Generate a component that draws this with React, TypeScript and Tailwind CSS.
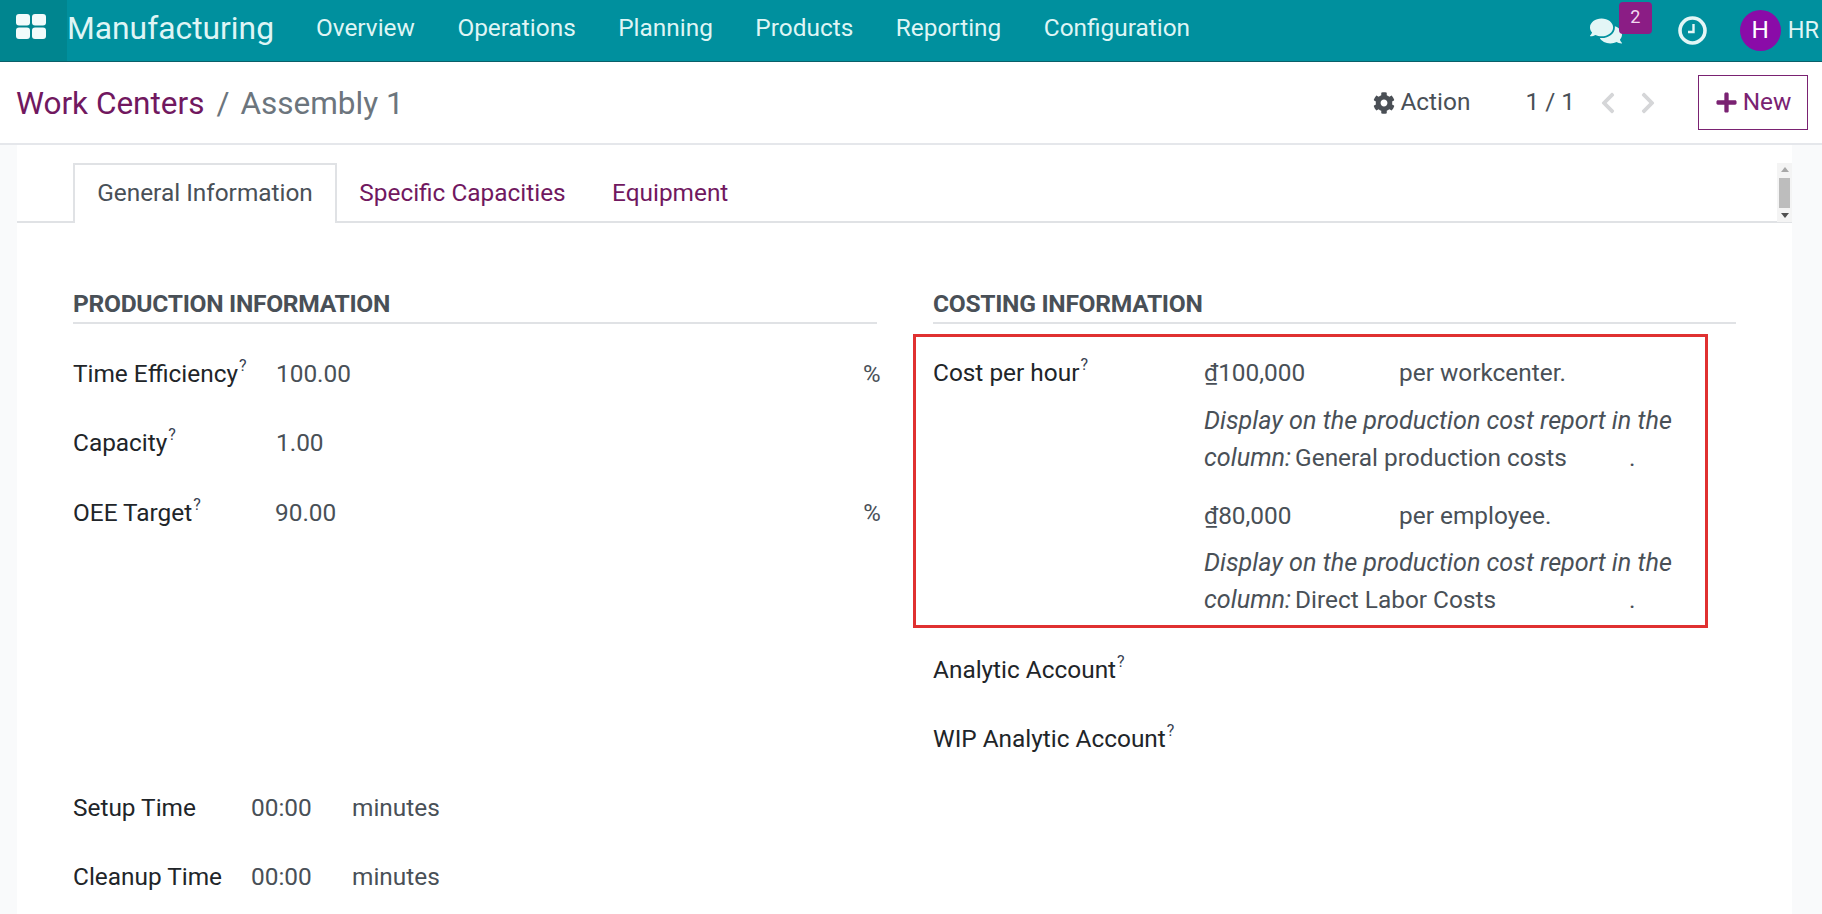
import React from "react";
import { FaCog, FaComments, FaPlus, FaChevronLeft, FaChevronRight } from "react-icons/fa";

const Q = () => <sup className="text-[16px] leading-none text-[#374151] relative top-[-2px] ml-[1px] align-super">?</sup>;

function Field({ label, value, valueW, unit, unitCls, h = "h-[69px]" }: { label: string; value: string; valueW: string; unit?: string; unitCls?: string; h?: string }) {
  return (
    <div className={`flex items-center ${h}`}>
      <div className={`${valueW} shrink-0 text-[#212529]`}>{label}<Q /></div>
      <div className="text-[#495057]">{value}</div>
      {unit && <div className={unitCls}>{unit}</div>}
    </div>
  );
}

function Time({ label, unit }: { label: string; unit: string }) {
  return (
    <div className="flex items-center h-[69px]">
      <div className="w-[178px] shrink-0 text-[#212529]">{label}</div>
      <div className="w-[101px] shrink-0 text-[#495057]">00:00</div>
      <div className="text-[#495057]">{unit}</div>
    </div>
  );
}

export default function App() {
  return (
    <div className="w-[1822px] h-[914px] overflow-hidden flex flex-col bg-white font-['Roboto',sans-serif] text-[24.4px]">
      <header className="h-[62px] shrink-0 flex items-stretch bg-[#00909e] border-b border-[#0a5f69] text-[#dff5f5]">
        <div className="w-[67px] shrink-0 bg-[#00858f] flex items-center pl-[16px] pb-[9px]">
          <svg width="30" height="25" viewBox="0 0 30 25" fill="#f2fbfb">
            <rect x="0" y="0" width="14" height="11.5" rx="3" />
            <rect x="16" y="0" width="14" height="11.5" rx="3" />
            <rect x="0" y="13.5" width="14" height="11.5" rx="3" />
            <rect x="16" y="13.5" width="14" height="11.5" rx="3" />
          </svg>
        </div>
        <div className="text-[31.8px] w-[249px] shrink-0 flex items-center pb-[4px]">Manufacturing</div>
        <nav className="flex items-center gap-[42.5px] pb-[4px]">
          <span>Overview</span><span>Operations</span><span>Planning</span><span>Products</span><span>Reporting</span><span>Configuration</span>
        </nav>
        <div className="ml-auto flex items-center relative">
          <FaComments className="text-[32px] text-[#e3f6f6] mr-[56px]" />
          <span className="absolute left-[29px] top-[2px] w-[33px] h-[32px] rounded-[4px] bg-[#8b1d85] text-[18px] text-[#f3d9f0] flex items-center justify-center pb-[4px]">2</span>
          <svg width="29" height="29" viewBox="0 0 29 29" fill="none" stroke="#e3f6f6" className="mr-[33px]">
            <circle cx="14.5" cy="14.5" r="12.5" strokeWidth="3.6" />
            <path d="M15.5 8v8H10" strokeWidth="2.4" />
          </svg>
          <div className="w-[41px] h-[41px] rounded-full bg-[#8a0ba8] text-white flex items-center justify-center mr-[7px]">H</div>
          <span className="mr-[3px] text-[23.5px]">HR</span>
        </div>
      </header>

      <div className="h-[83px] shrink-0 flex items-center border-b-2 border-[#e5e7eb] bg-white pl-[16px] pr-[14px]">
        <div className="text-[31.5px] flex items-baseline pt-[2px]">
          <span className="text-[#71185f]">Work Centers</span>
          <span className="text-[#6c757d] ml-[12px] mr-[11px]">/</span>
          <span className="text-[#6c757d]">Assembly 1</span>
        </div>
        <div className="ml-auto flex items-center text-[#495057]">
          <FaCog className="text-[22px] mr-[5px] text-[#4a4f55]" />
          <span className="mr-[55px]">Action</span>
          <span className="mr-[21px]">1 / 1</span>
          <FaChevronLeft className="text-[24px] text-[#d5d6d8] mr-[16px]" />
          <FaChevronRight className="text-[24px] text-[#d5d6d8] mr-[38px]" />
          <button className="w-[110px] h-[55px] border border-[#7a2272] flex items-center justify-center text-[#7a2272] bg-white">
            <FaPlus className="text-[23px] mr-[5px]" />New
          </button>
        </div>
      </div>

      <div className="flex-1 min-h-0 bg-[#f9fafb] pl-[17px] pr-[30px]">
        <div className="bg-white h-full overflow-hidden">
          <div className="h-[78px] pt-[18px] pl-[56px] flex border-b-2 border-[#e0e2e5] relative">
            <div className="w-[264px] h-[60px] bg-white border-2 border-b-0 border-[#e0e2e5] flex items-center justify-center text-[#495057] pb-[2px]">General Information</div>
            <div className="w-[251px] h-[60px] flex items-center justify-center text-[#71185f]">Specific Capacities</div>
            <div className="h-[60px] flex items-center text-[#71185f] pl-[24px]">Equipment</div>
            <div className="absolute right-0 top-[18px] w-[15px] h-[59px] bg-[#f4f4f4] flex flex-col items-center justify-between py-[4px]">
              <span className="w-0 h-0 border-x-[4px] border-x-transparent border-b-[5px] border-b-[#a8a8a8]" />
              <span className="w-[11px] h-[30px] bg-[#bdbdbd]" />
              <span className="w-0 h-0 border-x-[4px] border-x-transparent border-t-[5px] border-t-[#505050]" />
            </div>
          </div>

          <div className="grid grid-cols-[804px_803px] gap-x-[56px] pl-[56px] pt-[54px]">
            <div>
              <h2 className="h-[47px] border-b-2 border-[#e0e2e5] text-[#495057] font-bold uppercase text-[24.6px] tracking-[-0.3px] leading-[54px]">Production Information</h2>
              <div className="pt-[15px]">
                <Field label="Time Efficiency" value="100.00" valueW="w-[203px]" unit="%" unitCls="ml-[512px] text-[24px] text-[#495057]" h="h-[70px]" />
                <Field label="Capacity" value="1.00" valueW="w-[203px]" />
                <Field label="OEE Target" value="90.00" valueW="w-[202px]" unit="%" unitCls="ml-[527px] text-[24px] text-[#495057]" h="h-[70px]" />
              </div>
              <div className="pt-[226px]">
                <Time label="Setup Time" unit="minutes" />
                <Time label="Cleanup Time" unit="minutes" />
              </div>
            </div>

            <div>
              <h2 className="h-[47px] border-b-2 border-[#e0e2e5] text-[#495057] font-bold uppercase text-[24.6px] tracking-[-0.3px] leading-[54px]">Costing Information</h2>
              <div className="relative pt-[30px] flex">
                <div className="absolute left-[-20px] top-[10px] w-[795px] h-[294px] border-[3px] border-[#e03131] pointer-events-none" />
                <div className="w-[271px] shrink-0 text-[#212529] leading-[37px]">Cost per hour<Q /></div>
                <div className="w-[470px] leading-[37px] text-[#495057]">
                  <div className="flex"><span className="w-[195px]"><span className="underline">₫</span>100,000</span><span>per workcenter.</span></div>
                  <div className="mt-[11px] italic text-[25.2px]">Display on the production cost report in the</div>
                  <div className="flex"><span className="italic mr-[4px] text-[25.2px]">column:</span><span className="w-[334px]">General production costs</span><span>.</span></div>
                  <div className="mt-[21px] flex"><span className="w-[195px]"><span className="underline">₫</span>80,000</span><span>per employee.</span></div>
                  <div className="mt-[10px] italic text-[25.2px]">Display on the production cost report in the</div>
                  <div className="flex"><span className="italic mr-[4px] text-[25.2px]">column:</span><span className="w-[334px]">Direct Labor Costs</span><span>.</span></div>
                </div>
              </div>
              <div className="pt-[18px]">
                <Field label="Analytic Account" value="" valueW="w-[271px]" />
                <Field label="WIP Analytic Account" value="" valueW="w-[271px]" />
              </div>
            </div>
          </div>
        </div>
      </div>
    </div>
  );
}
